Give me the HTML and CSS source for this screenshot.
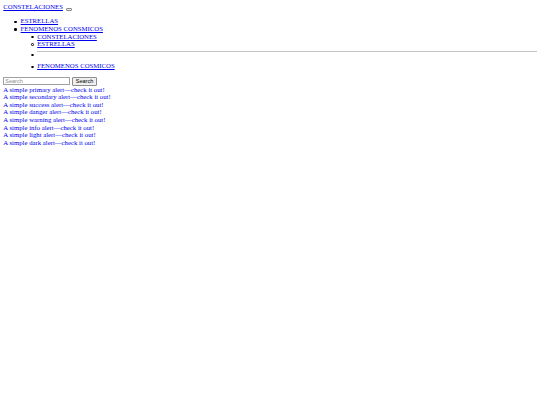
FILE: index.html
```html
<!DOCTYPE html>
<html lang="es">
<head>
<meta charset="utf-8">
<title>Constelaciones</title>
<link rel="stylesheet" href="styles.css">
</head>
<body class="page">
<nav class="navbar">
  <a class="brand" href="#">CONSTELACIONES</a>
  <button class="toggler" type="button"></button>
  <ul class="menu">
    <li class="item"><a href="#">ESTRELLAS</a></li>
    <li class="item"><a href="#">FENOMENOS CONSMICOS</a>
      <ul class="submenu">
        <li class="sub-item"><a href="#">CONSTELACIONES</a></li>
        <li class="sub-item"><a href="#">ESTRELLAS</a></li>
        <li class="divider-item"><hr class="divider"></li>
        <li class="sub-item"><a href="#">FENOMENOS COSMICOS</a></li>
      </ul>
    </li>
  </ul>
  <form class="search">
    <input class="search-input" type="search" placeholder="Search">
    <button class="search-btn" type="button">Search</button>
  </form>
</nav>
<div class="alert">A simple primary alert—check it out!</div>
<div class="alert">A simple secondary alert—check it out!</div>
<div class="alert">A simple success alert—check it out!</div>
<div class="alert">A simple danger alert—check it out!</div>
<div class="alert">A simple warning alert—check it out!</div>
<div class="alert">A simple info alert—check it out!</div>
<div class="alert">A simple light alert—check it out!</div>
<div class="alert">A simple dark alert—check it out!</div>
</body>
</html>
```
FILE: styles.css
```css
html {
  background: #ffffff;
}
.page {
  margin: 3.3px;
  font-family: "Liberation Serif", "Times New Roman", serif;
  font-size: 6.75px;
  line-height: 7.6px;
  color: #000000;
}
a {
  color: #0000ee;
}
.brand {
  display: inline-block;
}
.toggler {
  width: 6.5px;
  height: 2.8px;
  padding: 0;
  margin: 0 0 0 1px;
  border: 0.5px solid #8a8a8a;
  border-radius: 1px;
  background: #efefef;
  vertical-align: -0.6px;
}
.menu {
  margin: 6.6px 0 7px;
  padding-left: 17.3px;
  list-style: none;
}
.submenu {
  margin: 0;
  padding-left: 16.6px;
  list-style: none;
}
.item::before,
.sub-item::before {
  content: "";
  display: inline-block;
  box-sizing: border-box;
  width: 2.5px;
  height: 2.5px;
  margin-left: -6.2px;
  margin-right: 3.7px;
  border-radius: 50%;
  vertical-align: 0.4px;
}
.item::before {
  background: #000000;
}
.sub-item::before {
  border: 0.6px solid #000000;
}
.divider-item::after {
  content: "";
  display: block;
  box-sizing: border-box;
  width: 2.5px;
  height: 2.5px;
  margin: 1.6px 0 6.1px -6.2px;
  border: 0.6px solid #000000;
  border-radius: 50%;
}
.divider {
  margin: 3.4px 0 0;
  height: 0;
  border: 0;
  border-top: 1px solid #c4c4c4;
}
.search {
  display: flex;
  align-items: center;
  gap: 2px;
  margin: 0;
}
.search-input {
  width: 66.5px;
  height: 8.2px;
  box-sizing: border-box;
  margin: 0;
  padding: 0 1px;
  border: 0.8px solid #a0a0a0;
  border-radius: 0.5px;
  font-family: "Liberation Sans", Arial, sans-serif;
  font-size: 5.5px;
}
.search-input::placeholder {
  color: #8a8a8a;
}
.search-btn {
  width: 25.5px;
  height: 8.5px;
  box-sizing: border-box;
  margin: 0;
  padding: 0;
  border: 0.8px solid #8c8c8c;
  border-radius: 1px;
  background: #efefef;
  font-family: "Liberation Sans", Arial, sans-serif;
  font-size: 5.5px;
  color: #000000;
}
.alert {
  color: #0000ee;
}
```
